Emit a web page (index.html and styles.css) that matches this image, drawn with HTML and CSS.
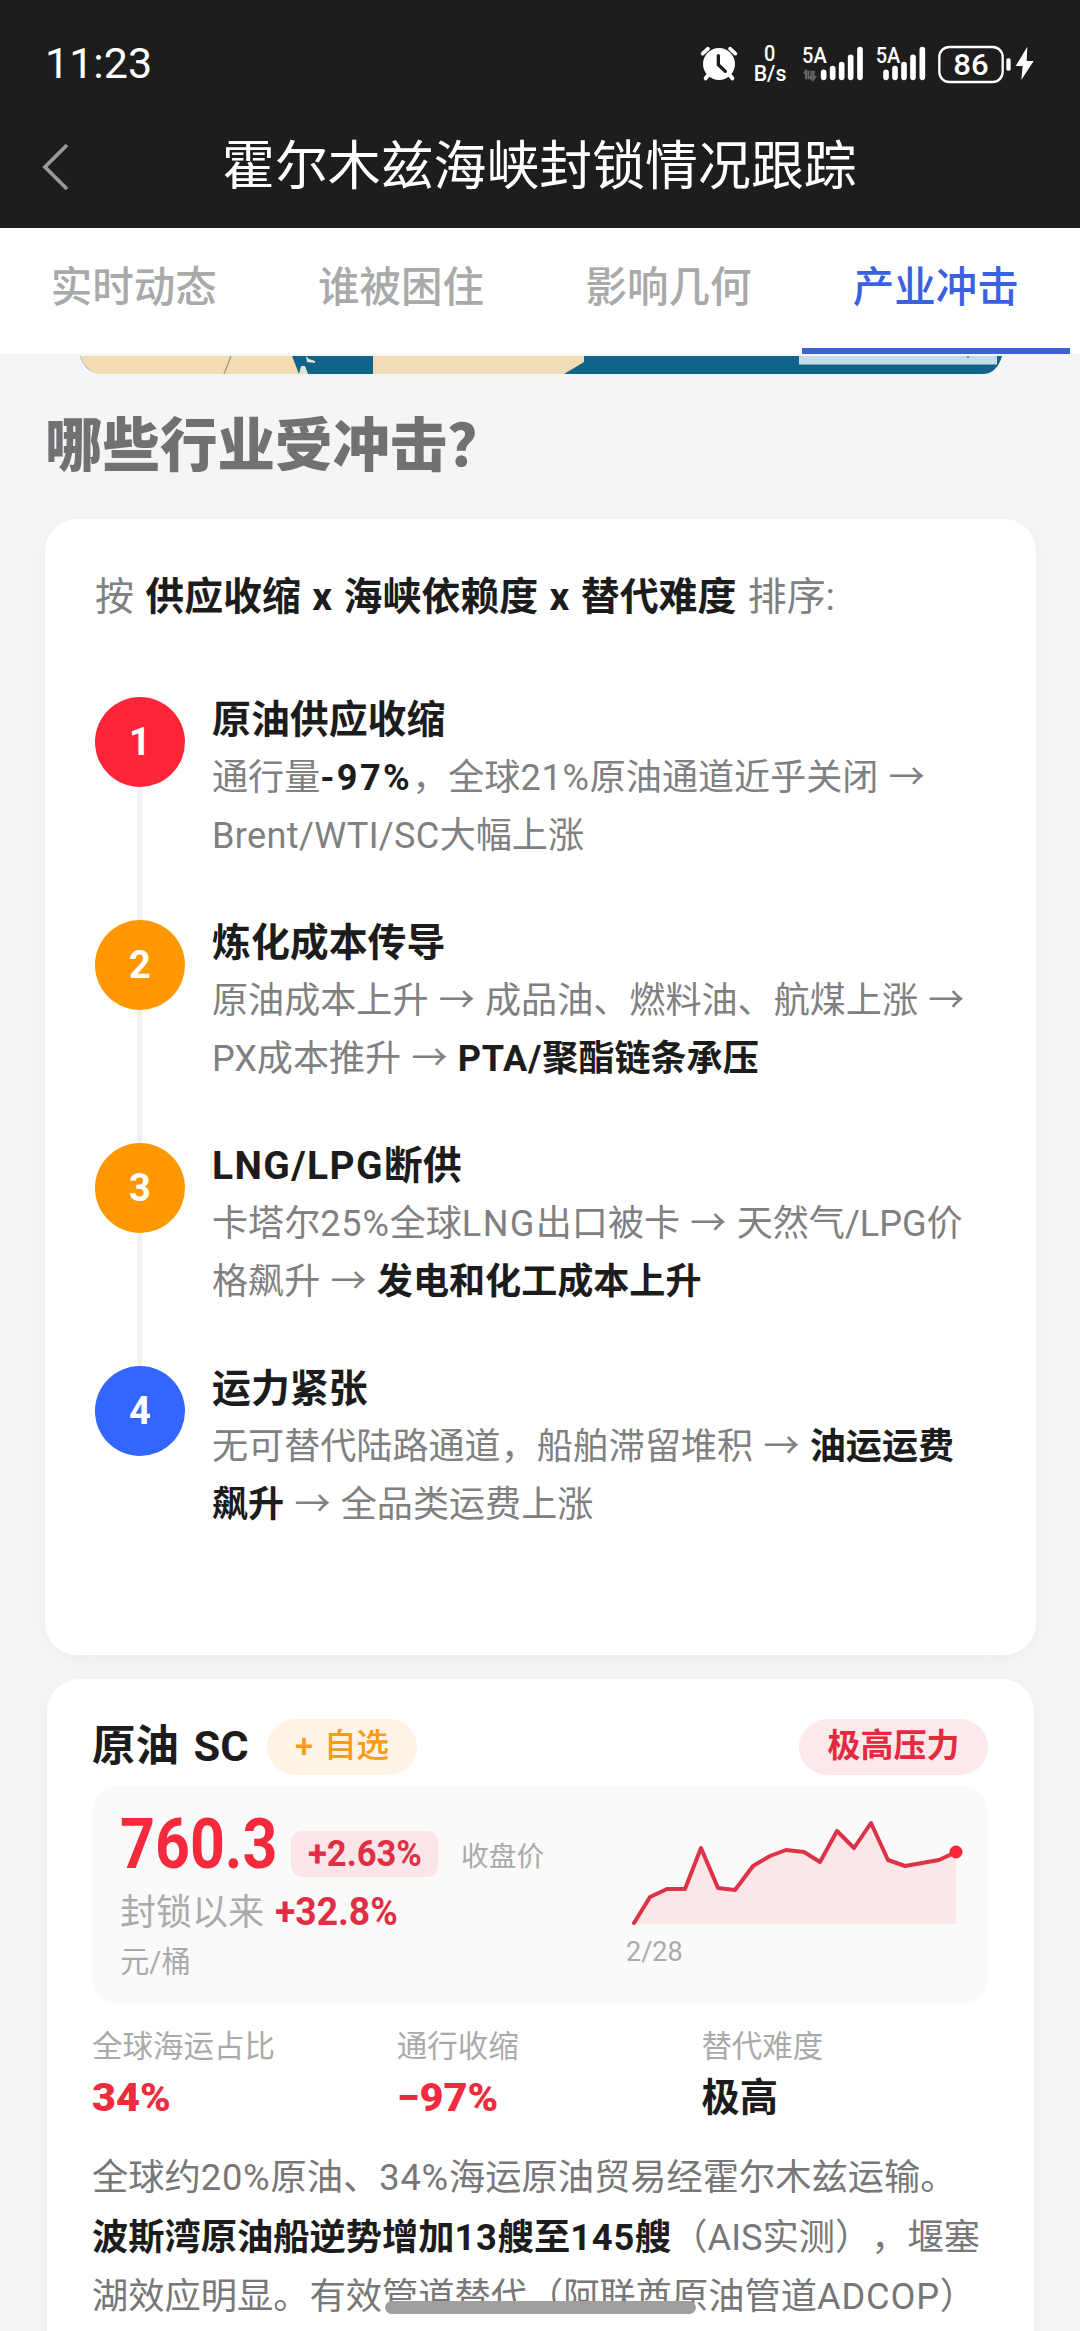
FILE: index.html
```html
<!DOCTYPE html>
<html lang="zh-CN">
<head>
<meta charset="utf-8">
<title>霍尔木兹海峡封锁情况跟踪</title>
<link rel="stylesheet" href="styles.css">
</head>
<body>
<header class="top">
  <div class="status">
    <span class="clock">11:23</span>
    <svg class="status-icons" width="400" height="90" viewBox="0 0 1200 270" fill="#fff">
      <!-- alarm -->
      <circle cx="117" cy="132" r="48"/>
      <path d="M68 101 L84 86 M150 86 L166 101" stroke="#fff" stroke-width="11" stroke-linecap="round"/>
      <path d="M86 164 L77 175 M148 164 L157 175" stroke="#fff" stroke-width="12" stroke-linecap="round"/>
      <path d="M115 107 V134 L136 154" stroke="#1d1d1d" stroke-width="10" fill="none" stroke-linecap="round"/>
      <!-- network speed -->
      <text x="252" y="124" font-size="66" textLength="34" lengthAdjust="spacingAndGlyphs" class="st">0</text>
      <text x="221" y="184" font-size="64" textLength="98" lengthAdjust="spacingAndGlyphs" class="st">B/s</text>
      <!-- signal one -->
      <text x="366" y="128" font-size="66" textLength="74" lengthAdjust="spacingAndGlyphs" class="st">5A</text>
      <path d="M378 178 V153 L371 160 M385 152 V178 M394 152 V177 L388 170 M401 152 V177 L408 168" stroke="#666" stroke-width="6" fill="none"/>
      <path d="M431 172 V157 M458 172 V146 M485 172 V134 M512 172 V112 M540 172 V89" stroke="#fff" stroke-width="17" stroke-linecap="round"/>
      <!-- signal two -->
      <text x="587" y="128" font-size="66" textLength="74" lengthAdjust="spacingAndGlyphs" class="st">5A</text>
      <path d="M618 172 V157 M645 172 V146 M672 172 V134 M699 172 V112 M727 172 V89" stroke="#fff" stroke-width="17" stroke-linecap="round"/>
      <!-- battery -->
      <rect x="778" y="81" width="190" height="105" rx="30" fill="none" stroke="#fff" stroke-width="7"/>
      <rect x="979" y="115" width="13" height="37" rx="5"/>
      <text x="820" y="166" font-size="90" textLength="106" lengthAdjust="spacingAndGlyphs" class="st">86</text>
      <path d="M1042 80 L1007 138 H1028 L1024 180 L1061 123 H1040 Z"/>
    </svg>
  </div>
  <div class="nav">
    <svg class="back" width="30" height="50" viewBox="0 0 30 50"><path d="M26 3 L4 25 L26 47" fill="none" stroke="#999" stroke-width="3.8"/></svg>
    <h1>霍尔木兹海峡封锁情况跟踪</h1>
  </div>
</header>
<nav class="tabs">
  <a>实时动态</a><a>谁被困住</a><a>影响几何</a><a class="on">产业冲击</a>
</nav>
<main>
  <svg class="map" width="922" height="18" viewBox="0 0 922 18">
    <path d="M0 0 H922 Q917 18 902 18 H18 Q4 14 0 0Z" fill="#11638a"/>
    <path d="M0 0 H212 L219 18 H16 Q4 12 0 0Z" fill="#f3dcb4"/>
    <path d="M151 0 L144 18" stroke="#9c9484" stroke-width="1.2"/>
    <path d="M219 18 L221 10 H225 L228 18Z M226 0 L229 3 L235 5 V7 L227 6Z" fill="#dfe5d6"/>
    <path d="M293 0 H504 V6 L484 18 H293Z" fill="#efdcb6"/>
    <path d="M719 0 H917 V8.5 H719Z" fill="#c4dbe9"/>
    <path d="M888 0 V2" stroke="#667" stroke-width="1.5"/>
  </svg>
  <h2>哪些行业受冲击？</h2>
  <section class="card rank">
    <p class="lead">按 <b>供应收缩 x 海峡依赖度 x 替代难度</b> 排序<span class="colon">:</span></p>
    <ol>
      <li><i class="dot red">1</i><div><h3>原油供应收缩</h3>
        <p>通行量<b class="drop">-97%</b>，全球<span class="n">21%</span>原油通道近乎关闭 →</p>
        <p><span class="grades">Brent/WTI/SC</span>大幅上涨</p></div></li>
      <li><i class="dot amber">2</i><div><h3>炼化成本传导</h3>
        <p>原油成本上升 → 成品油、燃料油、航煤上涨 →</p>
        <p>PX成本推升 → <b><span class="n">PTA/</span>聚酯链条承压</b></p></div></li>
      <li><i class="dot amber">3</i><div><h3><span class="gas">LNG/LPG</span>断供</h3>
        <p>卡塔尔<span class="n">25%</span>全球<span class="gas">LNG</span>出口被卡 → 天然气/LPG价</p>
        <p>格飙升 → <b>发电和化工成本上升</b></p></div></li>
      <li><i class="dot blue">4</i><div><h3>运力紧张</h3>
        <p>无可替代陆路通道，船舶滞留堆积 → <b>油运运费</b></p>
        <p><b>飙升</b> → 全品类运费上涨</p></div></li>
    </ol>
  </section>
  <section class="card oil">
    <div class="head">
      <h3>原油 SC</h3><span class="pill add">+ 自选</span><span class="pill high">极高压力</span>
    </div>
    <div class="quote">
      <div class="figures">
        <div class="price"><span class="fit w-price"><b>760.3</b></span><span class="chg"><span class="fit w-chg"><b>+2.63%</b></span></span><span class="close">收盘价</span></div>
        <div class="since">封锁以来<span class="fit w-since"><b>+32.8%</b></span></div>
        <div class="unit">元/桶</div>
      </div>
      <div class="trend">
        <svg width="340" height="112" viewBox="0 0 340 112">
          <path d="M6 108 L22 82 L39 74 H57 L73 33 L90 73 L107 75 L125 51 L142 41 L158 35 L176 37 L192 47 L209 16 L226 33 L243 8 L260 45 L277 51 L294 48 L311 45 L328 37 V109 H6Z" fill="#fbe6e8"/>
          <path d="M6 108 L22 82 L39 74 H57 L73 33 L90 73 L107 75 L125 51 L142 41 L158 35 L176 37 L192 47 L209 16 L226 33 L243 8 L260 45 L277 51 L294 48 L311 45 L328 37" fill="none" stroke="#dd3247" stroke-width="4" stroke-linejoin="round" stroke-linecap="round"/>
          <circle cx="328" cy="37" r="6.5" fill="#ff2438"/>
        </svg>
        <span class="date">2/28</span>
      </div>
    </div>
    <dl>
      <div><dt>全球海运占比</dt><dd class="up"><span class="fit w-34"><b>34%</b></span></dd></div>
      <div><dt>通行收缩</dt><dd class="up"><span class="fit w-97"><b>−97%</b></span></dd></div>
      <div><dt>替代难度</dt><dd>极高</dd></div>
    </dl>
    <div class="note">
      <p>全球约<span class="n">20%</span>原油、<span class="n">34%</span>海运原油贸易经霍尔木兹运输。</p>
      <p><b>波斯湾原油船逆势增加<span class="n">13</span>艘至<span class="n">145</span>艘</b>（AIS实测），堰塞</p>
      <p>湖效应明显。有效管道替代（阿联酋原油管道<span class="n">ADCOP</span>）</p>
    </div>
  </section>
</main>
<div class="homebar"></div>
</body>
</html>
```

FILE: styles.css
```css
* { box-sizing: border-box; margin: 0; padding: 0; }
body {
  width: 1080px; height: 2331px; overflow: hidden; position: relative;
  background: #f3f5f7; color: #1c1c1c;
  font-family: Roboto, "Noto Sans CJK SC", sans-serif;
  white-space: nowrap;
}
i { font-style: normal; }
ol { list-style: none; }

.top { height: 228px; background: #1d1d1d; color: #fff; }
.status { display: flex; height: 110px; padding: 20px 0 0 45px; }
.clock { font-size: 43px; line-height: 86px; flex: 1; }
.status-icons { margin-left: 0; margin-right: 0; flex: none; }
.st { font-weight: 500; }
.nav { display: flex; align-items: center; height: 110px; padding-left: 41px; }
.nav .back { margin-top: 4px; }
.nav h1 { font-size: 52.9px; font-weight: 400; line-height: 80px; margin: 4px 0 0 151px; }

.tabs { display: flex; height: 126px; background: #fff; }
.tabs a {
  width: 267.4px; text-align: center; font-size: 41.5px; font-weight: 500;
  line-height: 120px; color: #a9a9a9; border-bottom: 6px solid transparent;
}
.tabs .on { color: #3a62e0; border-color: #3f60d6; }

main { display: flex; flex-direction: column; padding-top: 2px; }
.map { display: block; margin-left: 80px; }
h2 { margin-left: 45px; font-size: 57.5px; font-weight: 900; line-height: 145px; height: 145px; color: #707173; }

.card { background: #fff; border-radius: 32px; box-shadow: 0 4px 20px rgba(0, 30, 20, .04); }
.rank { width: 991px; height: 1136px; margin-left: 45px; padding: 48px 50px 0; }
.lead { font-size: 38.9px; line-height: 60px; color: #808080; word-spacing: 1.8px; }
.lead b { color: #1c1c1c; }
.rank ol { padding-top: 70px; }
.rank li { display: flex; gap: 27px; height: 223px; position: relative; }
.rank li > div { padding-top: 1px; }
.rank li:not(:last-child)::before {
  content: ""; position: absolute; left: 42px; top: 90px; width: 5px; height: 133px; background: #f1f1f1;
}
.dot {
  width: 90px; height: 90px; border-radius: 50%; color: #fff;
  font-size: 38px; line-height: 91px; font-weight: 700; text-align: center;
}
.red { background: #ff2438; }
.amber { background: #ff9800; }
.blue { background: #3366ff; }
.rank h3 { font-size: 38.9px; line-height: 44px; margin-bottom: 7px; }
.rank li p { font-size: 36.1px; line-height: 58px; color: #808080; word-spacing: 1.3px; }
.rank li b, .note b { color: #1c1c1c; }
.n { letter-spacing: .8px; }
.grades { letter-spacing: .35px; }
.gas { letter-spacing: 1.4px; }
.drop { letter-spacing: 2.4px; }

.oil { width: 987px; height: 700px; margin: 24px 0 0 47px; padding: 40px 46px 0 45px; }
.head { display: flex; align-items: center; height: 56px; }
.head h3 { font-size: 43.4px; line-height: 56px; width: 175px; word-spacing: 4px; }
.pill { height: 56px; border-radius: 28px; line-height: 54px; text-align: center; font-weight: 500; }
.add { width: 150px; font-size: 32.5px; word-spacing: 3px; background: #fff3e6; color: #fb9a13; }
.high { width: 189px; font-size: 33px; font-weight: 700; margin-left: auto; background: #fde8ea; color: #e32b40; }

.quote { display: flex; justify-content: space-between; height: 218px; margin-top: 11px; padding: 22px 28px 0; border-radius: 24px; background: #fafafa; }
.price { display: flex; height: 76px; color: #f5293c; }
.fit { display: inline-block; }
.fit b { display: inline-block; transform-origin: 0 50%; }
.w-price { width: 171px; font-size: 70px; line-height: 72px; }
.w-price b { transform: scaleX(.87); }
.chg { width: 147px; height: 46px; margin-top: 23px; padding-left: 17px; border-radius: 11px; background: #fbe5e8; font-size: 36px; line-height: 46px; color: #e02f44; }
.w-chg b { transform: scaleX(.96); }
.close { margin: 26px 0 0 23px; font-size: 27.7px; line-height: 46px; color: #aaa; width: 85px; }
.w-chg { width: 130px; }
.since { font-size: 36px; line-height: 54px; padding-top: 2px; color: #aaa; }
.w-since { margin-left: 11px; font-size: 38px; line-height: 53px; color: #e02f44; }
.w-since b { transform: scaleX(.98); }
.unit { font-size: 29.3px; line-height: 44px; color: #aaa; }
.trend { display: flex; flex-direction: column; width: 340px; margin-top: 7px; margin-right: -8px; }
.date { font-size: 27px; line-height: 40px; margin-top: 5px; margin-left: -2px; color: #aaa; }

dl { display: grid; grid-template-columns: repeat(3, 304.7px); padding-top: 21px; }
dt { font-size: 30.5px; line-height: 44px; color: #aaa; }
dd { font-size: 38.3px; font-weight: 700; line-height: 56px; padding-top: 1px; }
.up { color: #ef2b3e; }
.w-34 b, .w-97 b { transform: scaleX(1.08); }
.note { padding-top: 22px; }
.note p { font-size: 36.25px; line-height: 59.5px; color: #777; text-spacing-trim: space-all; }

.homebar { position: absolute; left: 385px; top: 2301px; width: 311px; height: 13px; border-radius: 7px; background: #9f9f9f; }
```
